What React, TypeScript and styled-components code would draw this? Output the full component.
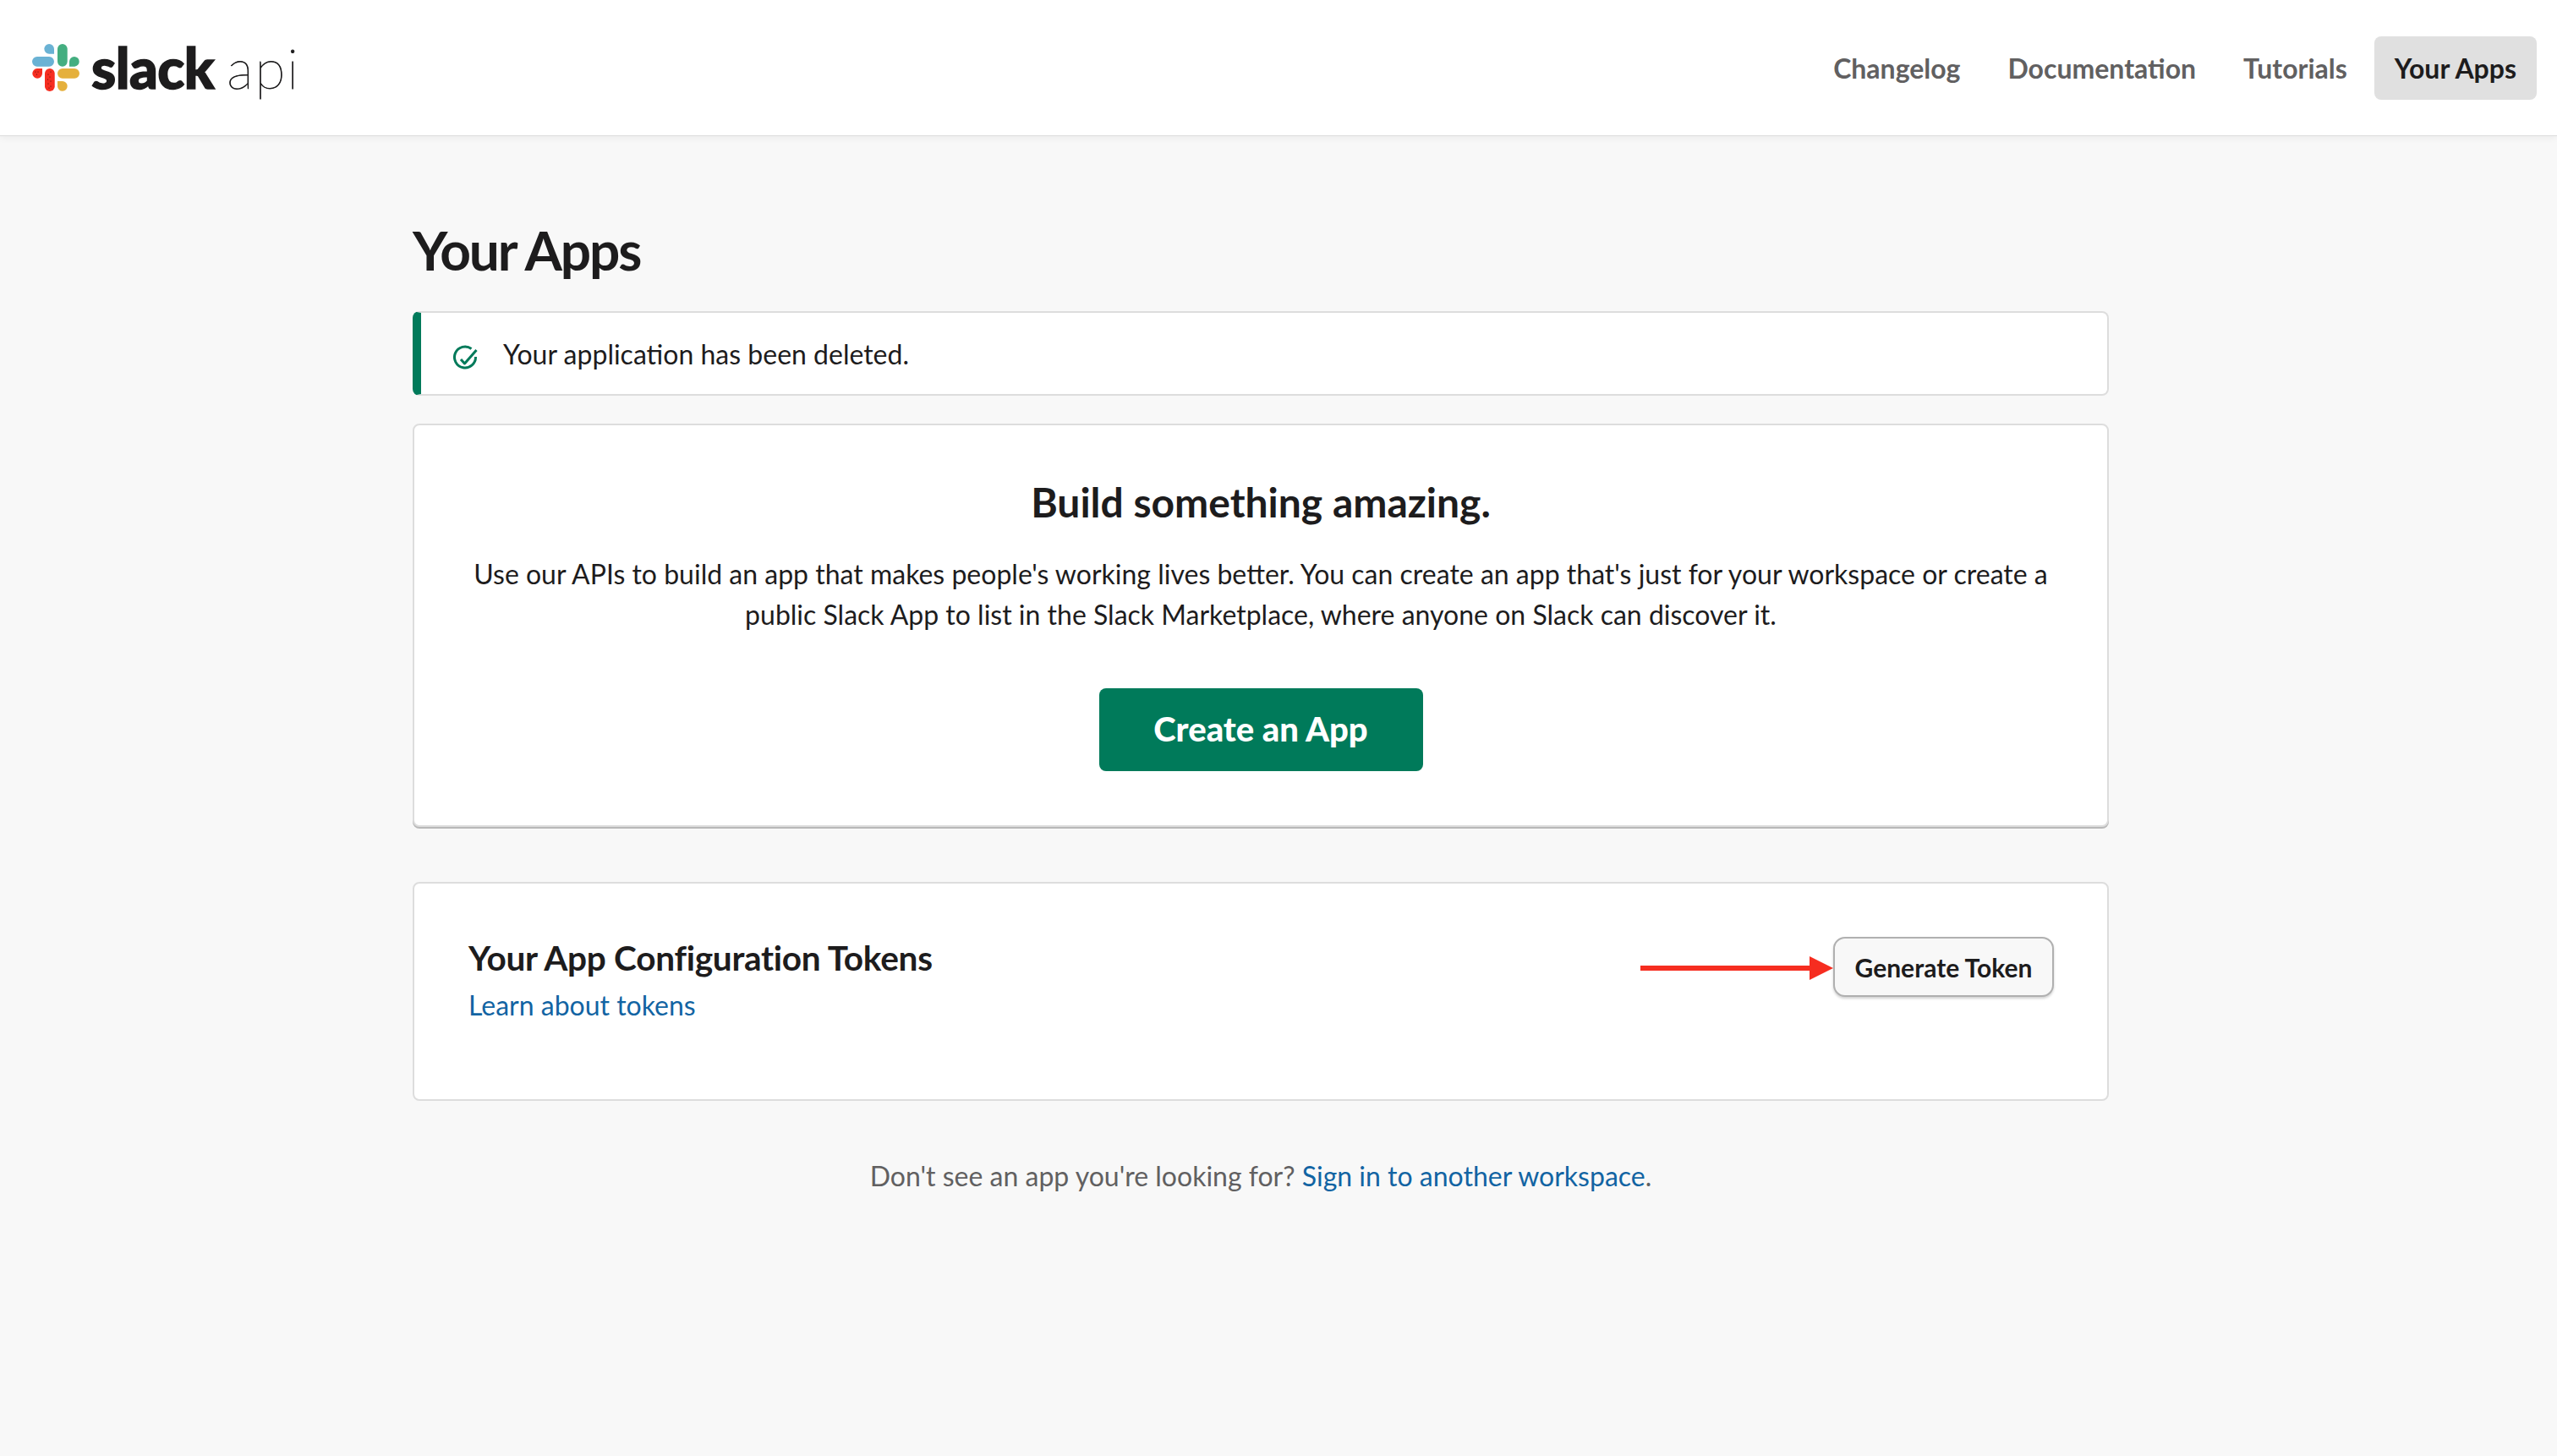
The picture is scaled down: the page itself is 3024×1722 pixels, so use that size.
import styled, { createGlobalStyle } from "styled-components";

const GlobalStyle = createGlobalStyle`
  html, body {
    margin: 0;
    padding: 0;
    background: #f8f8f8;
    font-family: "Lato", "Liberation Sans", sans-serif;
    color: #1d1c1d;
  }
  * {
    box-sizing: border-box;
  }
`;

const Page = styled.div`
  width: 3024px;
  height: 1722px;
  overflow: hidden;
`;
const Header = styled.header`
  height: 160px;
  padding: 0 24px 0 38px;
  display: flex;
  align-items: center;
  justify-content: space-between;
  background: #ffffff;
  box-shadow: 0 1px 0 #dddddd, 0 3px 8px rgba(0, 0, 0, 0.06);
`;
const Logo = styled.a`
  display: flex;
  align-items: center;
  gap: 14px;
  color: #1d1c1d;
`;
const LogoText = styled.span`
  display: flex;
  align-items: baseline;
  gap: 15px;
`;
const LogoWord = styled.span`
  font-size: 66px;
  line-height: 64px;
  font-weight: 900;
  letter-spacing: -0.5px;
  -webkit-text-stroke: 1.5px #1d1c1d;
`;
const LogoApi = styled.span`
  font-size: 66px;
  line-height: 64px;
  font-weight: 100;
  letter-spacing: 2px;
  -webkit-text-stroke: 0.8px #1d1c1d;
`;
const Nav = styled.nav`
  display: flex;
  align-items: center;
  gap: 8px;
`;
const NavLink = styled.a<{ $active?: boolean }>`
  height: 75px;
  padding: 0 24px;
  display: flex;
  align-items: center;
  border-radius: 8px;
  font-size: 32px;
  font-weight: 700;
  color: ${(p) => (p.$active ? "#1d1c1d" : "#616061")};
  background: ${(p) => (p.$active ? "#e0e0e0" : "transparent")};
`;
const Main = styled.main`
  width: 2006px;
  margin-left: 488px;
  display: flex;
  flex-direction: column;
`;
const Title = styled.h1`
  margin: 96px 0 0;
  height: 112px;
  font-size: 64px;
  line-height: 80px;
  font-weight: 700;
  letter-spacing: -2.1px;
`;
const Alert = styled.div`
  height: 100px;
  display: flex;
  align-items: center;
  gap: 30px;
  padding-left: 38px;
  background: #ffffff;
  border: 2px solid #dddddd;
  border-left: 10px solid #007a5a;
  border-radius: 8px;
  font-size: 32px;
  svg {
    margin-top: 9px;
  }
`;
const Card = styled.section`
  background: #ffffff;
  border: 2px solid #dddddd;
  border-radius: 8px;
`;
const BuildCard = styled(Card)`
  height: 477px;
  margin-top: 33px;
  padding-top: 59px;
  display: flex;
  flex-direction: column;
  align-items: center;
  text-align: center;
  box-shadow: 0 2px 0 #b8b8b8;
`;
const BuildTitle = styled.h2`
  margin: 0;
  font-size: 48px;
  line-height: 64px;
  font-weight: 700;
`;
const BuildText = styled.p`
  margin: 29px 0 0;
  width: 1900px;
  font-size: 32px;
  line-height: 48px;
`;
const CreateButton = styled.a`
  width: 383px;
  height: 98px;
  margin-top: 63px;
  padding-bottom: 2px;
  display: flex;
  align-items: center;
  justify-content: center;
  border-radius: 8px;
  background: #007a5a;
  color: #ffffff;
  font-size: 40px;
  font-weight: 900;
`;
const TokenCard = styled(Card)`
  height: 259px;
  margin-top: 65px;
  padding: 62px 63px 0 64px;
  display: flex;
  justify-content: space-between;
  align-items: flex-start;
`;
const TokenTitle = styled.h3`
  margin: 0;
  font-size: 40.6px;
  line-height: 52px;
  font-weight: 700;
  letter-spacing: -0.3px;
`;
const TextLink = styled.a`
  color: #1264a3;
`;
const TokenLink = styled(TextLink)`
  display: block;
  margin-top: 6px;
  font-size: 32px;
  line-height: 48px;
`;
const TokenAction = styled.div`
  display: flex;
  align-items: center;
  margin-top: 1px;
  svg {
    margin-top: 3px;
  }
`;
const GenerateButton = styled.button`
  width: 261px;
  height: 71px;
  padding: 0;
  background: #f8f8f8;
  border: 2px solid #b0b0b0;
  border-radius: 14px;
  box-shadow: 0 2px 3px rgba(0, 0, 0, 0.18);
  color: #1d1c1d;
  font-family: inherit;
  font-size: 30px;
  font-weight: 700;
`;
const Footer = styled.p`
  margin: 65px 0 0;
  text-align: center;
  color: #616061;
  font-size: 32px;
  line-height: 48px;
`;

const SlackMark = () => (
  <svg width="56" height="56" viewBox="0 0 56 56">
    <path d="M26 11.7V5.85a5.85 5.85 0 1 0-5.85 5.85z" fill="#6ab2d4" />
    <rect x="0" y="15" width="26" height="11.7" rx="5.85" fill="#6ab2d4" />
    <rect x="30" y="0" width="11.7" height="26.7" rx="5.85" fill="#44ae80" />
    <path d="M44 26.7h6.15a5.85 5.85 0 1 0-6.15-5.85z" fill="#44ae80" />
    <path d="M12 29H5.85a5.85 5.85 0 1 0 6.15 5.85z" fill="#f62d20" />
    <rect x="15" y="29" width="11.7" height="27" rx="5.85" fill="#f62d20" />
    <rect x="30" y="29" width="26" height="11.7" rx="5.85" fill="#e5b03c" />
    <path d="M30 44v6.15a5.85 5.85 0 1 0 5.85-6.15z" fill="#e5b03c" />
    <g fill="#3a1410">
      <circle cx="4" cy="33" r="0.6" />
      <circle cx="7" cy="33" r="0.6" />
      <circle cx="5.5" cy="36" r="0.6" />
      <circle cx="19" cy="36" r="0.6" />
      <circle cx="22" cy="33" r="0.6" />
      <circle cx="21" cy="39" r="0.6" />
      <circle cx="18.5" cy="42" r="0.6" />
      <circle cx="22" cy="44" r="0.6" />
      <circle cx="19" cy="47" r="0.6" />
      <circle cx="22" cy="50" r="0.6" />
      <circle cx="20" cy="52" r="0.6" />
    </g>
  </svg>
);

const CheckIcon = () => (
  <svg width="29" height="29" viewBox="0 0 29 29" fill="none" stroke="#007a5a" strokeWidth="3" strokeLinejoin="round">
    <path d="M21.5 4.5A12.5 12.5 0 1 0 26.5 14" />
    <path d="M9 17l4.5 5L27.5 6" />
  </svg>
);

const RedArrow = () => (
  <svg width="228" height="28" viewBox="0 0 228 28">
    <rect x="0" y="11" width="202" height="6" fill="#f62d20" />
    <path d="M200 0l28 14-28 14z" fill="#f62d20" />
  </svg>
);

const App = () => {
  return (
    <Page>
      <GlobalStyle />
      <Header>
        <Logo>
          <SlackMark />
          <LogoText>
            <LogoWord>slack</LogoWord>
            <LogoApi>api</LogoApi>
          </LogoText>
        </Logo>
        <Nav>
          <NavLink>Changelog</NavLink>
          <NavLink>Documentation</NavLink>
          <NavLink>Tutorials</NavLink>
          <NavLink $active>Your Apps</NavLink>
        </Nav>
      </Header>
      <Main>
        <Title>Your Apps</Title>
        <Alert>
          <CheckIcon />
          Your application has been deleted.
        </Alert>
        <BuildCard>
          <BuildTitle>Build something amazing.</BuildTitle>
          <BuildText>
            Use our APIs to build an app that makes people's working lives better. You can create an app that's just for your workspace or create a public Slack App to list in the Slack Marketplace, where anyone on Slack can discover it.
          </BuildText>
          <CreateButton>Create an App</CreateButton>
        </BuildCard>
        <TokenCard>
          <div>
            <TokenTitle>Your App Configuration Tokens</TokenTitle>
            <TokenLink>Learn about tokens</TokenLink>
          </div>
          <TokenAction>
            <RedArrow />
            <GenerateButton>Generate Token</GenerateButton>
          </TokenAction>
        </TokenCard>
        <Footer>
          Don't see an app you're looking for? <TextLink>Sign in to another workspace</TextLink>.
        </Footer>
      </Main>
    </Page>
  );
};

export default App;
